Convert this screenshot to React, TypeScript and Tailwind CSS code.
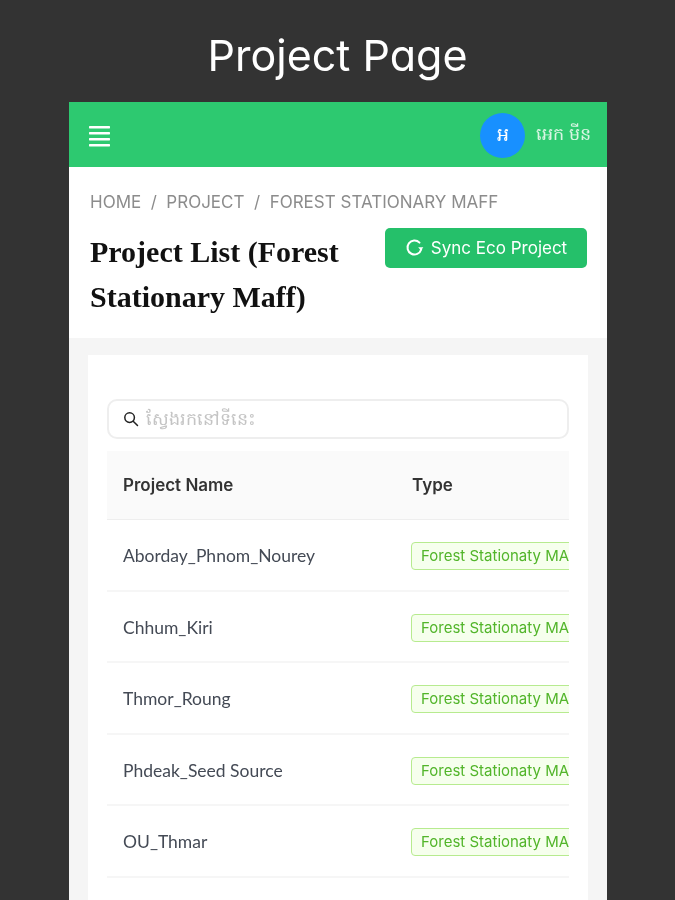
const rows = ["Aborday_Phnom_Nourey", "Chhum_Kiri", "Thmor_Roung", "Phdeak_Seed Source", "OU_Thmar", ""];

export default function App() {
  return (
    <div className="h-[900px] w-[675px] overflow-hidden bg-[#333333] font-['Inter',sans-serif] blur-[0.4px]">
      <h1 className="flex h-[102px] items-center justify-center pt-[8px] text-[43px] font-normal text-white [font-feature-settings:'cv11']">Project Page</h1>
      <div className="mx-[69px] flex h-[798px] w-[538px] flex-col bg-[#f5f5f5]">
        <header className="flex h-[65px] shrink-0 items-center justify-between bg-[#2dc970] pl-[20px] pr-[16px] pt-[2px]">
          <svg width="21" height="22" viewBox="0 0 21 22" className="text-white" fill="currentColor">
            <rect y="1" width="21" height="2.4" rx="0.6" />
            <rect y="7" width="21" height="2.4" rx="0.6" />
            <rect y="13" width="21" height="2.4" rx="0.6" />
            <rect y="19" width="21" height="2.4" rx="0.6" />
          </svg>
          <div className="flex items-center gap-[11px]">
            <div className="flex h-[45px] w-[45px] items-center justify-center rounded-full bg-[#1890ff] text-[19px] text-white">អ</div>
            <span className="mb-[3px] text-[17.5px] text-[#d9f5e3]">អេក មីន</span>
          </div>
        </header>
        <section className="flex h-[171px] shrink-0 flex-col bg-white pl-[21px] pr-[20px] pt-[24px]">
          <div className="flex gap-[9.5px] text-[17px] leading-[22px] text-[#8c8c8c]">
            <span>HOME</span><span>/</span><span>PROJECT</span><span>/</span><span>FOREST STATIONARY MAFF</span>
          </div>
          <div className="mt-[15px] flex items-start justify-between">
            <h2 className="mt-[1px] w-[270px] font-['Liberation_Serif',serif] text-[30px] font-bold leading-[45px] text-[#111111]">Project List (Forest Stationary Maff)</h2>
            <button className="flex h-[40px] w-[202px] items-center justify-center gap-[7px] rounded-[5px] bg-[#25c06a] pt-[2px] text-[17px] text-white">
              <svg width="19" height="19" viewBox="0 0 19 19" fill="none" stroke="currentColor" strokeWidth="2" strokeLinecap="round" className="mb-[3px]">
                <path d="M16.2 11.5A7 7 0 1 1 14.5 4.6" />
                <path d="M13.2 9.2h5.2l-2.6 3.2z" fill="currentColor" stroke="none" />
              </svg>
              Sync Eco Project
            </button>
          </div>
        </section>
        <main className="mx-[19px] mt-[17px] flex-1 bg-white px-[19px] pt-[44px]">
          <div className="flex h-[40px] items-center gap-[7px] rounded-[10px] border-2 border-[#eeeeee] bg-white pl-[14px]">
            <svg width="16" height="16" viewBox="0 0 16 16" fill="none" stroke="#222222" strokeWidth="1.5" strokeLinecap="round">
              <circle cx="6.6" cy="6.6" r="4.8" />
              <path d="M10.2 10.2 14.5 14.5" />
            </svg>
            <span className="text-[17.5px] text-[#c4c4c4]">ស្វែងរកនៅទីនេះ</span>
          </div>
          <div className="mt-[12px] overflow-hidden">
            <div className="flex h-[69px] items-center border-b border-[#eeeeee] bg-[#fafafa] pt-[2px] text-[17px] font-semibold text-[#333333]">
              <span className="w-[305px] pl-[16px]">Project Name</span>
              <span>Type</span>
            </div>
            {rows.map((name, i) => (
              <div key={i} className="flex h-[71.5px] items-center border-b-2 border-[#f6f6f6] pt-[3px] font-['Lato',sans-serif] text-[17.5px] text-[#444a55]">
                <span className="w-[304px] shrink-0 pl-[16px]">{name}</span>
                {name && (
                  <span className="flex h-[28px] w-[200px] shrink-0 items-center whitespace-nowrap rounded-[4px] border border-[#b7eb8f] bg-[#f6ffed] pl-[9px] font-['Inter',sans-serif] text-[15px] text-[#52b52a]">Forest Stationaty MAFF</span>
                )}
              </div>
            ))}
          </div>
        </main>
      </div>
    </div>
  );
}
